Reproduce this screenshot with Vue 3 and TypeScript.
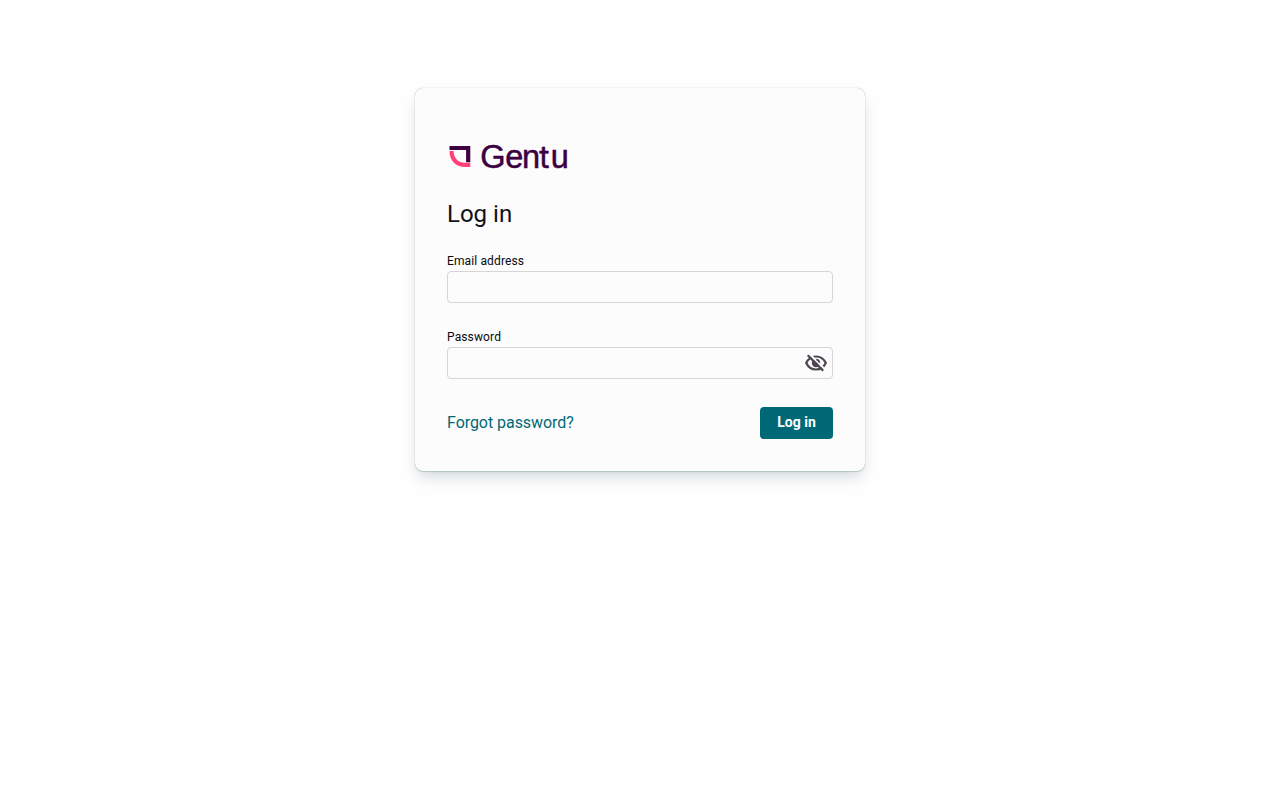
<template>
  <main class="page">
    <form class="card" @submit.prevent>
      <svg class="logo" width="128" height="42" viewBox="0 -4 128 42" role="img" aria-label="Gentu">
        <path class="logo-dark" d="M2.500 6h20.800v16.300h-4.200V10.100H2.500z" />
        <path class="logo-pink" d="M2.500 11h4.100c0 7 4.600 11.800 11.400 11.800h5.300V27H18C8.600 27 2.500 20.500 2.500 11z" />
        <text class="logo-text" x="33.300 58.300 75 92.300 103.700" y="28">Gen<tspan class="logo-t">t</tspan>u</text>
      </svg>

      <h1 class="title">Log in</h1>

      <div class="field">
        <label class="label" for="email">Email address</label>
        <input id="email" v-model="email" class="input" type="email" />
      </div>

      <div class="field">
        <label class="label" for="password">Password</label>
        <div class="input password">
          <input id="password" v-model="password" class="password-input" :type="visible ? 'text' : 'password'" />
          <button class="toggle" type="button" aria-label="Toggle password visibility" @click="visible = !visible">
            <svg width="24" height="24" viewBox="0 0 24 24" fill="none" stroke="currentColor" stroke-width="2.200">
              <path d="M2.200 12C4.300 7.700 7.600 5.500 12 5.500s7.700 2.200 9.800 6.500c-2.100 4.300-5.400 6.500-9.800 6.500S4.300 16.300 2.200 12z" />
              <circle cx="12" cy="12" r="4.200" fill="currentColor" stroke="none" />
              <path class="toggle-gap" d="M5.200 2.800l16 16" />
              <path d="M3.700 4.200l15.500 15.500" />
              <path d="M12.500 8.700c1.600.2 2.700 1.300 2.900 2.900" stroke-width="1.500" />
            </svg>
          </button>
        </div>
      </div>

      <div class="actions">
        <a class="forgot" href="#">Forgot password?</a>
        <button class="submit" type="submit">Log in</button>
      </div>
    </form>
  </main>
</template>

<script setup lang="ts">
import { ref } from 'vue';

const email = ref('');
const password = ref('');
const visible = ref(false);
</script>

<style>
body { background: #fefefe; }
</style>

<style scoped>
.page { box-sizing: border-box; display: flex; justify-content: center; align-items: flex-start; min-height: 100vh; padding-top: 88px; font-family: Roboto, sans-serif; color: #111118; }
.card { box-sizing: border-box; width: 450px; height: 383px; padding: 48px 32px 32px; border-radius: 8px; background: #fcfcfc; box-shadow: 0 0 1px rgba(0, 40, 48, 0.4), 0 1px 1px rgba(0, 60, 65, 0.14), 0 8px 16px -4px rgba(0, 50, 60, 0.22); }

.logo { display: block; }
.logo-dark { fill: #3c0042; }
.logo-pink { fill: #ff4079; }
.logo-text { font-family: 'Liberation Sans', sans-serif; font-size: 32.5px; fill: #3c0042; stroke: #3c0042; stroke-width: 0.5; }
.logo-t { font-family: Inter, sans-serif; font-size: 31px; }

.title { margin: 20px 0 0; font-size: 24px; font-weight: 400; line-height: 32px; }

.field { display: flex; flex-direction: column; margin-top: 23px; }
.field + .field { margin-top: 26px; }
.label { margin-bottom: 2px; color: #0a0a0d; font-size: 12px; letter-spacing: 0.13px; line-height: 16px; }
.input { box-sizing: border-box; width: 100%; height: 32px; padding: 0 8px; border: 1px solid #d5d5d5; border-radius: 4px; background: #fcfcfc; font: inherit; outline: none; }
.password { display: flex; align-items: center; padding-right: 4px; }
.password-input { flex: 1; min-width: 0; padding: 0; border: 0; background: transparent; font: inherit; outline: none; }
.toggle { display: flex; padding: 0; border: 0; background: none; color: #4f4552; cursor: pointer; }
.toggle-gap { stroke: #fcfcfc; stroke-width: 2px; }

.actions { display: flex; align-items: center; justify-content: space-between; margin-top: 28px; }
.forgot { color: #006975; font-size: 16px; letter-spacing: -0.05px; line-height: 24px; text-decoration: none; }
.submit { width: 73px; height: 32px; padding: 0 0 2px; border: 0; border-radius: 4px; background: #006975; color: #fff; font-family: inherit; font-size: 14px; font-weight: 700; line-height: 20px; cursor: pointer; }
</style>
